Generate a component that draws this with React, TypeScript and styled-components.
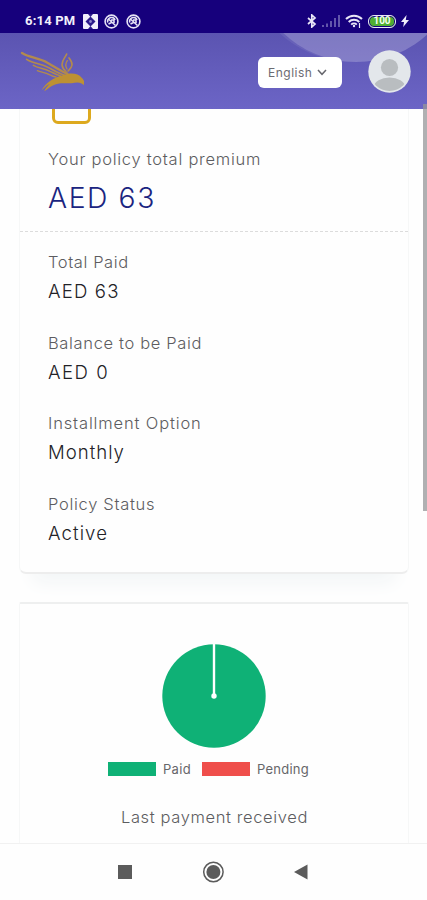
import React from 'react';
import styled, { createGlobalStyle } from 'styled-components';

const Global = createGlobalStyle`
  *, *::before, *::after { box-sizing: border-box; }
  body { margin: 0; background: #fff; }
`;

const Screen = styled.div`
  width: 427px;
  height: 900px;
  display: flex;
  flex-direction: column;
  overflow: hidden;
  background: #fefefe;
  font-family: Inter, 'Open Sans', sans-serif;
  font-weight: 300;
`;

const StatusBar = styled.div`
  flex: none;
  height: 33px;
  padding: 9px 18px 0 25px;
  display: flex;
  justify-content: space-between;
  align-items: flex-start;
  background: #16007c;
  color: #f1effb;
`;

const StatusGroup = styled.div<{ $gap: number }>`
  display: flex;
  align-items: center;
  height: 24px;
  gap: ${(p) => p.$gap}px;
`;

const Clock = styled.span`
  font: 700 13px/24px Roboto, sans-serif;
  letter-spacing: 0.2px;
  width: 51px;
  white-space: nowrap;
`;

const Battery = styled.span`
  width: 28px;
  height: 13px;
  border: 1.5px solid #e9e6f7;
  border-radius: 6px;
  background: #4fae32;
  box-shadow: inset 0 0 0 1px #16007c;
  color: #f4fff0;
  font: 700 10px/10px Roboto, sans-serif;
  text-align: center;
`;

const Header = styled.header`
  flex: none;
  position: relative;
  overflow: hidden;
  height: 76px;
  padding: 0 16px 0 10px;
  display: flex;
  align-items: center;
  background: linear-gradient(#5b54b1, #6c65c6);

  &::before {
    content: '';
    position: absolute;
    left: 250px;
    top: -183px;
    width: 212px;
    height: 212px;
    border-radius: 50%;
    background: rgba(255, 255, 255, 0.22);
    box-shadow: -3px -2px 0 2px rgba(255, 255, 255, 0.07);
  }
`;

const Logo = styled.svg`
  width: 90px;
  height: 60px;
  margin: -2px auto 0 0;
`;

const Language = styled.button`
  position: relative;
  display: flex;
  align-items: center;
  gap: 5px;
  width: 84px;
  height: 31px;
  margin: 2px 26px 0 0;
  padding: 0 0 0 10px;
  border: 0;
  border-radius: 6px;
  background: #fff;
  color: #6b6b72;
  font: 400 12px/31px Inter, sans-serif;
  letter-spacing: 0.5px;
`;

const Avatar = styled.svg`
  position: relative;
  width: 43px;
  height: 43px;
`;

const Content = styled.main`
  flex: none;
  position: relative;
  height: 734px;
  padding: 0 18px 0 19px;
  overflow: hidden;
`;

const Scrollbar = styled.div`
  position: absolute;
  z-index: 2;
  top: 104px;
  left: 423px;
  width: 4px;
  height: 407px;
  background: rgba(150, 150, 152, 0.75);
`;

const Card = styled.section<{ $summary?: boolean }>`
  height: ${(p) => (p.$summary ? 465 : 260)}px;
  margin-bottom: 28px;
  overflow: hidden;
  border: 1px solid #f6f7f7;
  border-top: ${(p) => (p.$summary ? '0' : '2px solid #eeefef')};
  border-bottom: ${(p) => (p.$summary ? '2px solid #ededed' : '0')};
  border-radius: ${(p) => (p.$summary ? '0 0 7px 7px' : '2px 2px 0 0')};
  background: #fefefe;
  box-shadow: ${(p) => (p.$summary ? '0 22px 18px -14px #f2f5f6' : 'none')};
`;

const Premium = styled.div`
  display: flow-root;
  height: 123px;
  padding-left: 28px;
  border-bottom: 1px dashed #dcdcdc;
`;

const IconFrame = styled.div`
  width: 39px;
  height: 40px;
  margin: -25px 0 23px 4px;
  border: 3px solid #dda91e;
  border-radius: 6px;
`;

const Label = styled.div<{ $track: number }>`
  font-size: 16.5px;
  line-height: 24px;
  letter-spacing: ${(p) => p.$track}px;
  color: #5c5c60;
  white-space: nowrap;
`;

const Amount = styled.div`
  margin-top: 7px;
  font-size: 28.3px;
  line-height: 40px;
  letter-spacing: 1.6px;
  color: #1a2480;
`;

const Details = styled.div`
  padding: 18px 0 0 28px;
  display: flex;
  flex-direction: column;
  gap: 25.7px;
`;

const Value = styled.div<{ $track: number }>`
  margin-top: 3px;
  font-size: 18.6px;
  line-height: 28px;
  letter-spacing: ${(p) => p.$track}px;
  color: #222227;
`;

const Chart = styled.svg`
  display: block;
  width: 104px;
  height: 104px;
  margin: 40px auto 0 142px;
`;

const Legend = styled.div`
  display: flex;
  align-items: center;
  height: 20px;
  margin: 11px 0 0 88px;
  font-size: 13px;
  font-weight: 400;
  color: #66666a;
`;

const Swatch = styled.span<{ $color: string }>`
  width: 48px;
  height: 14px;
  margin-right: 7px;
  background: ${(p) => p.$color};
`;

const LegendText = styled.span<{ $track: number }>`
  width: 39px;
  white-space: nowrap;
  letter-spacing: ${(p) => p.$track}px;
`;

const LastPayment = styled.div`
  padding-left: 101px;
  margin-top: 26px;
`;

const NavBar = styled.nav`
  flex: none;
  height: 57px;
  border-top: 1px solid #f1f1f1;
  background: #fefefe;
  display: flex;
  align-items: center;
  padding-left: 114px;
  gap: 66px;
`;

const NavIcon = styled.svg`
  width: 22px;
  height: 22px;
`;

const Lens = () => (
  <svg width="15" height="15" viewBox="0 0 15 15" fill="none" stroke="#e6e3f5" strokeWidth="1.6">
    <circle cx="7.5" cy="7.5" r="6.4" />
    <path d="M3.8 8.5A3.8 3.8 0 0 1 11 6M5 5.5l6.5 6M4.5 10l3-1.5M7 6h3v3" />
  </svg>
);

const details = [
  { label: 'Total Paid', value: 'AED 63', lt: 0.6, vt: 1.15 },
  { label: 'Balance to be Paid', value: 'AED 0', lt: 0.65, vt: 1.5 },
  { label: 'Installment Option', value: 'Monthly', lt: 0.85, vt: 1 },
  { label: 'Policy Status', value: 'Active', lt: 0.7, vt: 1.1 },
];

export default function App() {
  return (
    <Screen>
      <Global />
      <StatusBar>
        <StatusGroup $gap={6.5}>
          <Clock>6:14 PM</Clock>
          <svg width="15" height="15" viewBox="0 0 15 15">
            <rect width="15" height="15" rx="1" fill="#f1effb" />
            <path d="M7.5 2.5 12.5 7.5 7.5 12.5 2.5 7.5z" fill="#2c1b8b" />
            <path d="M5 0h5L7.5 3zM5 15h5L7.5 12z" fill="#2c1b8b" />
            <circle cx="7.5" cy="7.5" r="1.4" fill="#8c84c8" />
          </svg>
          <Lens />
          <Lens />
        </StatusGroup>
        <StatusGroup $gap={5}>
          <svg width="10" height="14" viewBox="0 0 10 14" fill="none" stroke="#e9e6f7" strokeWidth="1.7">
            <path d="M1 4l7 6-3.2 3V1L8 4l-7 6" />
          </svg>
          <svg width="18" height="12" viewBox="0 0 18 12" fill="#6256ab">
            <path d="M0 10h2v2H0zM4 8.5h2V12H4zM8 6h2v6H8zM12 3h2V12h-2zM16 0h2v12h-2z" />
          </svg>
          <svg width="18" height="14" viewBox="0 0 18 14" fill="none" stroke="#e9e6f7" strokeWidth="2">
            <path d="M1 5a11.5 11.5 0 0 1 16 0M3.7 8a7.6 7.6 0 0 1 10.6 0M6.2 10.6a4 4 0 0 1 5.6 0" />
            <circle cx="9" cy="12" r="1.2" fill="#e9e6f7" stroke="none" />
            <path d="M14.5 9v5" strokeWidth="1.2" />
          </svg>
          <Battery>100</Battery>
          <svg width="8" height="12" viewBox="0 0 8 12" fill="#f1effb">
            <path d="M5.6 0 0 7h3L2.2 12 8 4.9H4.8z" />
          </svg>
        </StatusGroup>
      </StatusBar>

      <Header>
        <Logo viewBox="0 0 270 180">
          <g fill="none" stroke="#b28a4e" strokeWidth="5" strokeLinecap="round" strokeLinejoin="round">
            <path d="M36 39C58 53 86 54 112 68C136 81 150 93 172 101" strokeWidth="7" />
            <path d="M50 58C68 71 90 69 112 81C132 91 144 100 162 105" />
            <path d="M70 76C86 85 102 84 120 94C132 100 140 105 152 108" strokeWidth="4.5" />
            <path d="M82 92C94 97 106 96 118 104C124 107 130 110 138 111" strokeWidth="4" />
            <path d="M170 42C166 53 156 59 156 74C157 84 162 90 168 94" />
            <path d="M177 54C182 61 187 67 186 75C185 84 178 89 174 93" />
            <path d="M172 62C167 69 165 77 171 87" strokeWidth="4" />
          </g>
          <path
            d="M95 151C107 128 132 113 158 106C181 97 204 99 215 113C224 121 223 127 221 136C214 127 203 126 185 130C163 130 145 127 127 137C118 142 111 149 103 154C105 145 114 138 119 132C108 136 102 145 95 151Z"
            fill="#bd9134"
          />
        </Logo>
        <Language>
          English
          <svg width="10" height="7" viewBox="0 0 10 7" fill="none" stroke="#66666c" strokeWidth="1.5">
            <path d="M1 1l4 4.3L9 1" />
          </svg>
        </Language>
        <Avatar viewBox="0 0 43 43">
          <defs>
            <clipPath id="face">
              <circle cx="21.5" cy="21.5" r="19.5" />
            </clipPath>
          </defs>
          <circle cx="21.5" cy="21.5" r="21.2" fill="#e3e7eb" />
          <g clipPath="url(#face)" fill="#b9bdc0">
            <circle cx="21.5" cy="17.5" r="8.6" />
            <ellipse cx="21.5" cy="37" rx="15.5" ry="9.5" />
          </g>
        </Avatar>
      </Header>
      <Scrollbar />

      <Content>
        <Card $summary>
          <Premium>
            <IconFrame />
            <Label $track={0.74}>Your policy total premium</Label>
            <Amount>AED 63</Amount>
          </Premium>
          <Details>
            {details.map((d) => (
              <div key={d.label}>
                <Label $track={d.lt}>{d.label}</Label>
                <Value $track={d.vt}>{d.value}</Value>
              </div>
            ))}
          </Details>
        </Card>
        <Card>
          <Chart viewBox="0 0 104 104">
            <circle cx="52" cy="52" r="51.7" fill="#0fb176" />
            <path d="M52 0v52" stroke="#fff" strokeWidth="2.4" />
            <circle cx="52" cy="52" r="2.7" fill="#fff" />
          </Chart>
          <Legend>
            <Swatch $color="#0fb176" />
            <LegendText $track={0.3}>Paid</LegendText>
            <Swatch $color="#ef4e4b" />
            <LegendText $track={0.25}>Pending</LegendText>
          </Legend>
          <LastPayment>
            <Label $track={0.62}>Last payment received</Label>
          </LastPayment>
        </Card>
      </Content>

      <NavBar>
        <NavIcon viewBox="0 0 22 22">
          <rect x="4" y="4" width="14" height="14" fill="#5b5b5b" />
        </NavIcon>
        <NavIcon viewBox="0 0 22 22">
          <circle cx="11.4" cy="11" r="9.7" fill="none" stroke="#5b5b5b" strokeWidth="1.5" />
          <circle cx="11.4" cy="11" r="7" fill="#5b5b5b" />
        </NavIcon>
        <NavIcon viewBox="0 0 22 22">
          <path d="M4 11 17.5 3.5v15z" fill="#5b5b5b" />
        </NavIcon>
      </NavBar>
    </Screen>
  );
}
